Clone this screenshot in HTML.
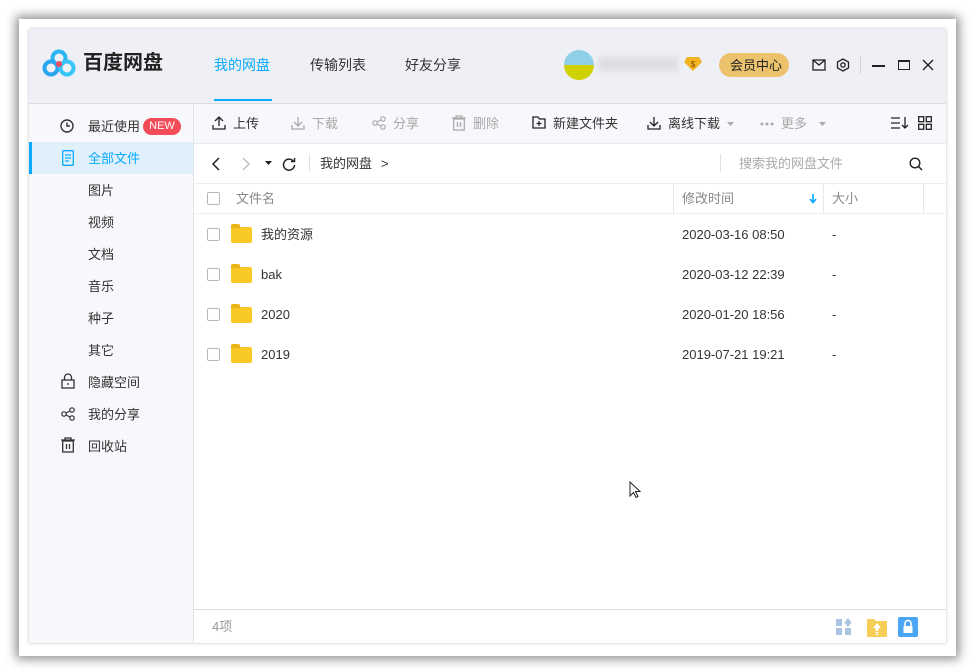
<!DOCTYPE html>
<html><head><meta charset="utf-8"><style>
*{margin:0;padding:0;box-sizing:border-box}
body{width:975px;height:672px;background:#fff;position:relative;overflow:hidden;font-family:"Liberation Sans","Noto Sans CJK SC",sans-serif;font-size:13px;color:#333}
.frame{position:absolute;left:19px;top:19px;width:937px;height:637px;background:#fff;box-shadow:0 0 10px 3px rgba(0,0,0,.45)}
.win{position:absolute;left:29px;top:29px;width:917px;height:614px;background:#fff;box-shadow:0 0 3px rgba(0,0,0,.25);overflow:hidden}
.abs{position:absolute}
.hdr{left:0;top:0;width:917px;height:75px;background:#eef0f5;border-bottom:1px solid #dcdde2}
.side{left:0;top:75px;width:165px;height:539px;background:#f7f8fb;border-right:1px solid #e2e4e8}
.tb{left:165px;top:75px;width:752px;height:40px;background:#f7f8fb;border-bottom:1px solid #e8e9ec}
.t{position:absolute;white-space:nowrap;line-height:15px}
.grey{color:#a8a8a8}
svg{position:absolute;overflow:visible}
.cb{position:absolute;width:13px;height:13px;border:1px solid #b8b8b8;border-radius:2px;background:#fff}
.fold{position:absolute;width:21px;height:16px;background:#f8c826;border-radius:2px}
.fold:before{content:"";position:absolute;left:0;top:-3px;width:9px;height:4px;background:#eab51a;border-radius:2px 2px 0 0}
</style></head><body>
<div class="frame"></div>
<div class="win">
<div class="abs hdr">
 <svg style="left:14px;top:20px" width="32" height="28" viewBox="0 0 32 28"><circle cx="16" cy="9" r="6.5" fill="none" stroke="#2bb5f5" stroke-width="4"/><circle cx="8" cy="19" r="6.5" fill="none" stroke="#2aa5f0" stroke-width="4"/><circle cx="24" cy="19" r="6.5" fill="none" stroke="#39c6f5" stroke-width="4"/><circle cx="16" cy="15" r="3" fill="#f04a5e"/></svg>
 <div class="t" style="left:54px;top:23px;font-size:20px;line-height:22px;font-weight:bold;color:#222">百度网盘</div>
 <div class="t" style="left:185px;top:28px;font-size:14px;line-height:16px;color:#09aaff">我的网盘</div>
 <div class="abs" style="left:185px;top:70px;width:58px;height:2px;background:#09aaff"></div>
 <div class="t" style="left:281px;top:28px;font-size:14px;line-height:16px;color:#333">传输列表</div>
 <div class="t" style="left:376px;top:28px;font-size:14px;line-height:16px;color:#333">好友分享</div>
 <div class="abs" style="left:535px;top:21px;width:30px;height:30px;border-radius:50%;background:linear-gradient(#8fd0e8 0 50%,#cfd200 50%)"></div>
 <div class="abs" style="left:569px;top:28px;width:80px;height:14px;background:#dcdde2;filter:blur(3px)"></div>
 <svg style="left:655px;top:28px" width="18" height="14"><path d="M3 0h12l3 5-9 9-9-9z" fill="#f2b420"/><text x="9" y="10" font-size="8" text-anchor="middle" fill="#7a4b00" font-family="Liberation Sans">$</text></svg>
 <div class="abs" style="left:690px;top:24px;width:70px;height:24px;border-radius:12px;background:#ecc26c"></div>
 <div class="t" style="left:701px;top:29px;font-size:13px;color:#222">会员中心</div>
 <svg style="left:783px;top:30px" width="14" height="12"><rect x="1" y="1" width="12" height="10" fill="none" stroke="#222" stroke-width="1.3"/><path d="M1 1l6 5 6-5" fill="none" stroke="#222" stroke-width="1.3"/></svg>
 <svg style="left:807px;top:29px" width="14" height="14"><path d="M7 1l5.5 3v6L7 13 1.5 10V4z" fill="none" stroke="#222" stroke-width="1.3"/><circle cx="7" cy="7" r="2.2" fill="none" stroke="#222" stroke-width="1.3"/></svg>
 <div class="abs" style="left:831px;top:27px;width:1px;height:18px;background:#d0d2d8"></div>
 <div class="abs" style="left:843px;top:36px;width:13px;height:1.5px;background:#222"></div>
 <div class="abs" style="left:869px;top:31px;width:12px;height:10px;border:1.4px solid #222;border-top-width:2.5px"></div>
 <svg style="left:893px;top:30px" width="12" height="12"><path d="M1 1l10 10M11 1L1 11" stroke="#222" stroke-width="1.4"/></svg>
</div>
<div class="abs side">
 <svg style="left:31px;top:15px" width="14" height="14"><circle cx="7" cy="7" r="6" fill="none" stroke="#333" stroke-width="1.4"/><path d="M7 3.5V7h3" fill="none" stroke="#333" stroke-width="1.4"/></svg>
 <div class="t" style="left:59px;top:15px">最近使用</div>
 <div class="abs" style="left:114px;top:14px;width:38px;height:17px;border-radius:9px;background:#f34c58;color:#fff;font-size:11px;text-align:center;line-height:17px">NEW</div>
 <div class="abs" style="left:0;top:38px;width:164px;height:32px;background:#dff0fb;border-left:3px solid #09aaff"></div>
 <svg style="left:33px;top:46px" width="12" height="16"><rect x="0.7" y="0.7" width="10.6" height="14.6" rx="1" fill="none" stroke="#09aaff" stroke-width="1.3"/><path d="M3 5h6M3 8h6M3 11h4" stroke="#09aaff" stroke-width="1.2"/></svg>
 <div class="t" style="left:59px;top:47px;color:#09aaff">全部文件</div>
 <div class="t" style="left:59px;top:79px">图片</div>
 <div class="t" style="left:59px;top:111px">视频</div>
 <div class="t" style="left:59px;top:143px">文档</div>
 <div class="t" style="left:59px;top:175px">音乐</div>
 <div class="t" style="left:59px;top:207px">种子</div>
 <div class="t" style="left:59px;top:239px">其它</div>
 <svg style="left:32px;top:269px" width="14" height="16"><path d="M3.5 7V4.5a3.5 3.5 0 0 1 7 0V7" fill="none" stroke="#333" stroke-width="1.3"/><rect x="1" y="7" width="12" height="8" fill="none" stroke="#333" stroke-width="1.3"/><path d="M7 10v2" stroke="#333" stroke-width="1.3"/></svg>
 <div class="t" style="left:59px;top:271px">隐藏空间</div>
 <svg style="left:32px;top:303px" width="14" height="14"><circle cx="3" cy="7" r="2.2" fill="none" stroke="#333" stroke-width="1.2"/><circle cx="11" cy="3" r="2.2" fill="none" stroke="#333" stroke-width="1.2"/><circle cx="11" cy="11" r="2.2" fill="none" stroke="#333" stroke-width="1.2"/><path d="M5 6l4-2M5 8l4 2" stroke="#333" stroke-width="1.2"/></svg>
 <div class="t" style="left:59px;top:303px">我的分享</div>
 <svg style="left:32px;top:333px" width="14" height="16"><path d="M0 3h14M4 3V1h6v2" fill="none" stroke="#333" stroke-width="1.3"/><rect x="1.7" y="4" width="10.6" height="11" fill="none" stroke="#333" stroke-width="1.3"/><path d="M5.5 7v5M8.5 7v5" stroke="#333" stroke-width="1.3"/></svg>
 <div class="t" style="left:59px;top:335px">回收站</div>
</div>
<div class="abs tb">
 <svg style="left:18px;top:12px" width="14" height="14"><path d="M7 10V1M3 5l4-4 4 4M1 9v4h12V9" fill="none" stroke="#222" stroke-width="1.3"/></svg>
 <div class="t" style="left:39px;top:12px">上传</div>
 <svg style="left:97px;top:12px" width="14" height="14"><path d="M7 1v9M3 6l4 4 4-4M1 9v4h12V9" fill="none" stroke="#aaa" stroke-width="1.3"/></svg>
 <div class="t grey" style="left:118px;top:12px">下载</div>
 <svg style="left:178px;top:12px" width="14" height="14"><circle cx="3" cy="7" r="2.2" fill="none" stroke="#aaa" stroke-width="1.2"/><circle cx="11" cy="3" r="2.2" fill="none" stroke="#aaa" stroke-width="1.2"/><circle cx="11" cy="11" r="2.2" fill="none" stroke="#aaa" stroke-width="1.2"/><path d="M5 6l4-2M5 8l4 2" stroke="#aaa" stroke-width="1.2"/></svg>
 <div class="t grey" style="left:199px;top:12px">分享</div>
 <svg style="left:258px;top:11px" width="14" height="16"><path d="M0 3h14M4 3V1h6v2" fill="none" stroke="#aaa" stroke-width="1.3"/><rect x="1.7" y="4" width="10.6" height="11" fill="none" stroke="#aaa" stroke-width="1.3"/><path d="M5.5 7v5M8.5 7v5" stroke="#aaa" stroke-width="1.3"/></svg>
 <div class="t grey" style="left:279px;top:12px">删除</div>
 <svg style="left:338px;top:12px" width="14" height="13"><path d="M1 1h5l1.5 2H13v9H1z" fill="none" stroke="#222" stroke-width="1.3"/><path d="M7 5v5M4.5 7.5h5" stroke="#222" stroke-width="1.2"/></svg>
 <div class="t" style="left:359px;top:12px">新建文件夹</div>
 <svg style="left:453px;top:12px" width="14" height="14"><path d="M7 1v9M3 6l4 4 4-4M1 9v4h12V9" fill="none" stroke="#222" stroke-width="1.3"/></svg>
 <div class="t" style="left:474px;top:12px">离线下载</div>
 <svg style="left:533px;top:18px" width="8" height="5"><path d="M0 0h7L3.5 4z" fill="#aaa"/></svg>
 <svg style="left:566px;top:18px" width="14" height="4"><circle cx="2" cy="2" r="1.5" fill="#aaa"/><circle cx="7" cy="2" r="1.5" fill="#aaa"/><circle cx="12" cy="2" r="1.5" fill="#aaa"/></svg>
 <div class="t grey" style="left:587px;top:12px">更多</div>
 <svg style="left:625px;top:18px" width="8" height="5"><path d="M0 0h7L3.5 4z" fill="#aaa"/></svg>
 <svg style="left:697px;top:13px" width="17" height="13"><path d="M0 1h9M0 6h9M0 11h9M14 0v11M11 8l3 3 3-3" fill="none" stroke="#222" stroke-width="1.3"/></svg>
 <svg style="left:724px;top:12px" width="14" height="14"><rect x=".7" y=".7" width="5" height="5" fill="none" stroke="#222" stroke-width="1.3"/><rect x="8.3" y=".7" width="5" height="5" fill="none" stroke="#222" stroke-width="1.3"/><rect x=".7" y="8.3" width="5" height="5" fill="none" stroke="#222" stroke-width="1.3"/><rect x="8.3" y="8.3" width="5" height="5" fill="none" stroke="#222" stroke-width="1.3"/></svg>
</div>
<svg style="left:183px;top:128px" width="8" height="14"><path d="M7 1L1 7l6 6" fill="none" stroke="#222" stroke-width="1.5"/></svg>
<svg style="left:213px;top:128px" width="8" height="14"><path d="M1 1l6 6-6 6" fill="none" stroke="#bbb" stroke-width="1.3"/></svg>
<svg style="left:236px;top:132px" width="8" height="5"><path d="M0 0h7L3.5 4z" fill="#222"/></svg>
<svg style="left:253px;top:128px" width="14" height="14"><path d="M11.5 4.5A5.5 5.5 0 1 0 12.5 8" fill="none" stroke="#222" stroke-width="1.5"/><path d="M9 4.5h3.5V1" fill="none" stroke="#222" stroke-width="1.5"/></svg>
<div class="abs" style="left:280px;top:125px;width:1px;height:18px;background:#e2e2e2"></div>
<div class="t" style="left:291px;top:127px">我的网盘</div>
<div class="t" style="left:352px;top:127px">&gt;</div>
<div class="abs" style="left:691px;top:125px;width:1px;height:18px;background:#e2e2e2"></div>
<div class="t" style="left:710px;top:127px;color:#aaa">搜索我的网盘文件</div>
<svg style="left:880px;top:128px" width="14" height="14"><circle cx="6" cy="6" r="4.8" fill="none" stroke="#222" stroke-width="1.4"/><path d="M9.5 9.5L13 13" stroke="#222" stroke-width="1.5"/></svg>
<div class="abs" style="left:165px;top:154px;width:752px;height:1px;background:#eceef0"></div>
<div class="cb" style="left:178px;top:163px"></div>
<div class="t" style="left:207px;top:162px;color:#888">文件名</div>
<div class="abs" style="left:644px;top:155px;width:1px;height:30px;background:#e8e8e8"></div>
<div class="t" style="left:653px;top:162px;color:#888">修改时间</div>
<svg style="left:780px;top:165px" width="8" height="10"><path d="M4 0v8M1 5l3 3.5L7 5" fill="none" stroke="#09aaff" stroke-width="1.6"/></svg>
<div class="abs" style="left:794px;top:155px;width:1px;height:30px;background:#e8e8e8"></div>
<div class="t" style="left:803px;top:162px;color:#888">大小</div>
<div class="abs" style="left:894px;top:155px;width:1px;height:30px;background:#e8e8e8"></div>
<div class="abs" style="left:165px;top:184px;width:752px;height:1px;background:#eceef0"></div>
<div class="cb" style="left:178px;top:199px"></div><div class="fold" style="left:202px;top:198px"></div><div class="t" style="left:232px;top:198px">我的资源</div><div class="t" style="left:653px;top:198px">2020-03-16 08:50</div><div class="t" style="left:803px;top:198px">-</div>
<div class="cb" style="left:178px;top:239px"></div><div class="fold" style="left:202px;top:238px"></div><div class="t" style="left:232px;top:238px">bak</div><div class="t" style="left:653px;top:238px">2020-03-12 22:39</div><div class="t" style="left:803px;top:238px">-</div>
<div class="cb" style="left:178px;top:279px"></div><div class="fold" style="left:202px;top:278px"></div><div class="t" style="left:232px;top:278px">2020</div><div class="t" style="left:653px;top:278px">2020-01-20 18:56</div><div class="t" style="left:803px;top:278px">-</div>
<div class="cb" style="left:178px;top:319px"></div><div class="fold" style="left:202px;top:318px"></div><div class="t" style="left:232px;top:318px">2019</div><div class="t" style="left:653px;top:318px">2019-07-21 19:21</div><div class="t" style="left:803px;top:318px">-</div>
<svg style="left:600px;top:452px" width="12" height="18"><path d="M1 1v14l3.5-3.5 2.5 5 2-1-2.5-5H11z" fill="#fff" stroke="#222" stroke-width="1"/></svg>
<div class="abs" style="left:165px;top:580px;width:752px;height:1px;background:#dcdcdc"></div>
<div class="t" style="left:183px;top:590px;color:#999">4项</div>
<svg style="left:807px;top:589px" width="18" height="18"><rect x="0" y="1" width="6" height="7" fill="#a9c4e2"/><rect x="0" y="10" width="6" height="7" fill="#a9c4e2"/><rect x="9" y="10" width="6" height="7" fill="#a9c4e2"/><path d="M12 0l3.5 4.5L12 9 8.5 4.5z" fill="#a9c4e2"/></svg>
<svg style="left:838px;top:588px" width="20" height="20"><path d="M0 2h7l2 2h11v16H0z" fill="#f6ce55"/><path d="M10 6l4 5h-2.5v3h-3v-3H6z M8.5 15h3v1h-3zM8.5 17h3v1h-3z" fill="#fff"/></svg>
<svg style="left:869px;top:588px" width="20" height="20"><rect width="20" height="20" rx="2" fill="#4aa6f4"/><path d="M7 9V6.5a3 3 0 0 1 6 0V9" fill="none" stroke="#fff" stroke-width="1.6"/><rect x="5.5" y="9" width="9" height="7" fill="#fff"/></svg>
</div>
</body></html>
